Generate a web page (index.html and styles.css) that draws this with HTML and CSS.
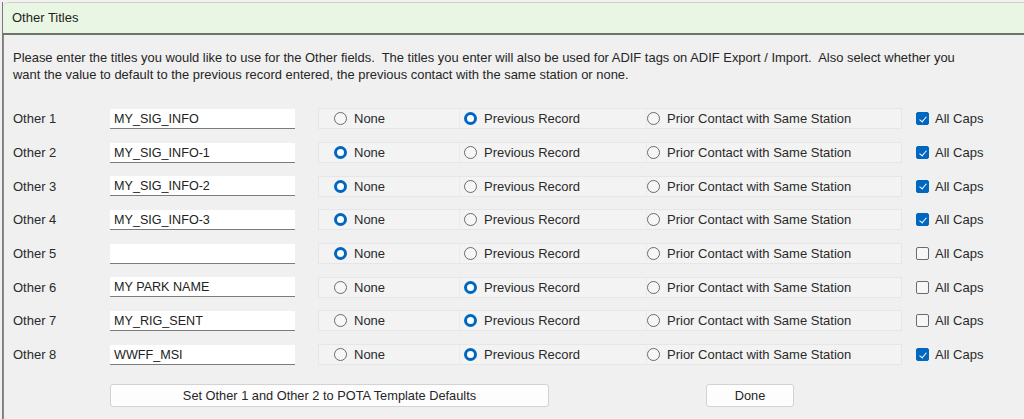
FILE: index.html
```html
<!DOCTYPE html>
<html>
<head>
<meta charset="utf-8">
<link rel="stylesheet" href="styles.css">
</head>
<body>
<div class="window">
  <div class="titlebar">Other Titles</div>
  <div class="content">
    <p class="intro">Please enter the titles you would like to use for the Other fields.&nbsp; The titles you enter will also be used for ADIF tags on ADIF Export / Import.&nbsp; Also select whether you<br>want the value to default to the previous record entered, the previous contact with the same station or none.</p>
    <div class="rows">
      <div class="row">
        <span class="label">Other 1</span>
        <div class="input">MY_SIG_INFO</div>
        <div class="group">
          <span class="opt o1"><span class="radio"></span>None</span>
          <span class="opt o2"><span class="radio on"></span>Previous Record</span>
          <span class="opt o3"><span class="radio"></span>Prior Contact with Same Station</span>
        </div>
        <span class="check"><span class="box on"></span>All Caps</span>
      </div>
      <div class="row">
        <span class="label">Other 2</span>
        <div class="input">MY_SIG_INFO-1</div>
        <div class="group">
          <span class="opt o1"><span class="radio on"></span>None</span>
          <span class="opt o2"><span class="radio"></span>Previous Record</span>
          <span class="opt o3"><span class="radio"></span>Prior Contact with Same Station</span>
        </div>
        <span class="check"><span class="box on"></span>All Caps</span>
      </div>
      <div class="row">
        <span class="label">Other 3</span>
        <div class="input">MY_SIG_INFO-2</div>
        <div class="group">
          <span class="opt o1"><span class="radio on"></span>None</span>
          <span class="opt o2"><span class="radio"></span>Previous Record</span>
          <span class="opt o3"><span class="radio"></span>Prior Contact with Same Station</span>
        </div>
        <span class="check"><span class="box on"></span>All Caps</span>
      </div>
      <div class="row">
        <span class="label">Other 4</span>
        <div class="input">MY_SIG_INFO-3</div>
        <div class="group">
          <span class="opt o1"><span class="radio on"></span>None</span>
          <span class="opt o2"><span class="radio"></span>Previous Record</span>
          <span class="opt o3"><span class="radio"></span>Prior Contact with Same Station</span>
        </div>
        <span class="check"><span class="box on"></span>All Caps</span>
      </div>
      <div class="row">
        <span class="label">Other 5</span>
        <div class="input"></div>
        <div class="group">
          <span class="opt o1"><span class="radio on"></span>None</span>
          <span class="opt o2"><span class="radio"></span>Previous Record</span>
          <span class="opt o3"><span class="radio"></span>Prior Contact with Same Station</span>
        </div>
        <span class="check"><span class="box"></span>All Caps</span>
      </div>
      <div class="row">
        <span class="label">Other 6</span>
        <div class="input">MY PARK NAME</div>
        <div class="group">
          <span class="opt o1"><span class="radio"></span>None</span>
          <span class="opt o2"><span class="radio on"></span>Previous Record</span>
          <span class="opt o3"><span class="radio"></span>Prior Contact with Same Station</span>
        </div>
        <span class="check"><span class="box"></span>All Caps</span>
      </div>
      <div class="row">
        <span class="label">Other 7</span>
        <div class="input">MY_RIG_SENT</div>
        <div class="group">
          <span class="opt o1"><span class="radio"></span>None</span>
          <span class="opt o2"><span class="radio on"></span>Previous Record</span>
          <span class="opt o3"><span class="radio"></span>Prior Contact with Same Station</span>
        </div>
        <span class="check"><span class="box"></span>All Caps</span>
      </div>
      <div class="row">
        <span class="label">Other 8</span>
        <div class="input">WWFF_MSI</div>
        <div class="group">
          <span class="opt o1"><span class="radio"></span>None</span>
          <span class="opt o2"><span class="radio on"></span>Previous Record</span>
          <span class="opt o3"><span class="radio"></span>Prior Contact with Same Station</span>
        </div>
        <span class="check"><span class="box on"></span>All Caps</span>
      </div>
    </div>
    <div class="buttons">
      <button class="btn btn-pota">Set Other 1 and Other 2 to POTA Template Defaults</button>
      <button class="btn btn-done">Done</button>
    </div>
  </div>
</div>
</body>
</html>
```

FILE: styles.css
```css
html, body {
  margin: 0;
  padding: 0;
  background: #f0f0f0;
}
body {
  width: 1024px;
  height: 419px;
  overflow: hidden;
  font-family: "Liberation Sans", Arial, sans-serif;
  font-size: 13px;
  color: #262626;
}
.window {
  margin: 2px 0 0 2px;
  height: 417px;
  border-left: 1px solid #7a7a7a;
  background: #f0f0f0;
  display: flex;
  flex-direction: column;
}
.titlebar {
  height: 30px;
  line-height: 29px;
  padding-left: 9px;
  background: #e9f6e3;
  border-top: 1px solid #c9d2c6;
  border-top-left-radius: 6px;
  border-bottom: 2px solid #6f736e;
  font-size: 13px;
  color: #1e1e1e;
}
.content {
  flex: 1;
  border-left: 1px solid #8a8a8a;
  padding-left: 9px;
}
.intro {
  margin: 14px 0 0 0;
  font-size: 12.95px;
  line-height: 17px;
  color: #262626;
}
.rows {
  margin-top: 19px;
  display: flex;
  flex-direction: column;
}
.row {
  height: 33.7px;
  display: flex;
  align-items: center;
}
.label {
  width: 97px;
  flex: none;
  color: #2a2a2a;
}
.input {
  width: 185px;
  height: 20px;
  line-height: 20px;
  padding-left: 4px;
  background: #ffffff;
  border-bottom: 1px solid #7c7c7c;
  box-sizing: border-box;
  color: #222;
  flex: none;
  font-size: 12.6px;
}
.group {
  margin-left: 23px;
  width: 584px;
  height: 21px;
  flex: none;
  display: flex;
  align-items: center;
  background: #f3f3f3;
  border: 1px solid #e6e6e6;
  box-sizing: border-box;
}
.opt {
  display: flex;
  align-items: center;
  height: 100%;
  color: #2a2a2a;
  box-sizing: border-box;
}
.o1 { width: 141px; padding-left: 15px; border-right: 1px solid #ebebeb; }
.o2 { width: 187px; padding-left: 4px; border-right: 1px solid #ebebeb; }
.o3 { padding-left: 0; }
.radio {
  width: 13px;
  height: 13px;
  border-radius: 50%;
  border: 1px solid #6b6b6b;
  background: #f7f7f7;
  box-sizing: border-box;
  margin-right: 7px;
  flex: none;
}
.radio.on {
  border: 3.5px solid #0067c0;
  background: #ffffff;
}
.check {
  margin-left: 14px;
  display: flex;
  align-items: center;
  color: #2a2a2a;
}
.box {
  width: 13px;
  height: 13px;
  border-radius: 2px;
  border: 1px solid #6b6b6b;
  background: #f7f7f7;
  box-sizing: border-box;
  margin-right: 6px;
  position: relative;
}
.box.on {
  background: #0067c0;
  border-color: #0067c0;
}
.box.on::after {
  content: "";
  position: absolute;
  left: 3.5px;
  top: 1.5px;
  width: 3px;
  height: 6px;
  border-right: 1.5px solid #fff;
  border-bottom: 1.5px solid #fff;
  transform: rotate(40deg);
}
.buttons {
  margin-top: 12px;
  display: flex;
  align-items: center;
}
.btn {
  height: 23px;
  background: #fdfdfd;
  border: 1px solid #d3d3d3;
  border-radius: 3px;
  font-family: "Liberation Sans", Arial, sans-serif;
  font-size: 12.8px;
  color: #262626;
  padding: 0;
}
.btn-pota {
  margin-left: 97px;
  width: 439px;
}
.btn-done {
  margin-left: 157px;
  width: 88px;
}
```
